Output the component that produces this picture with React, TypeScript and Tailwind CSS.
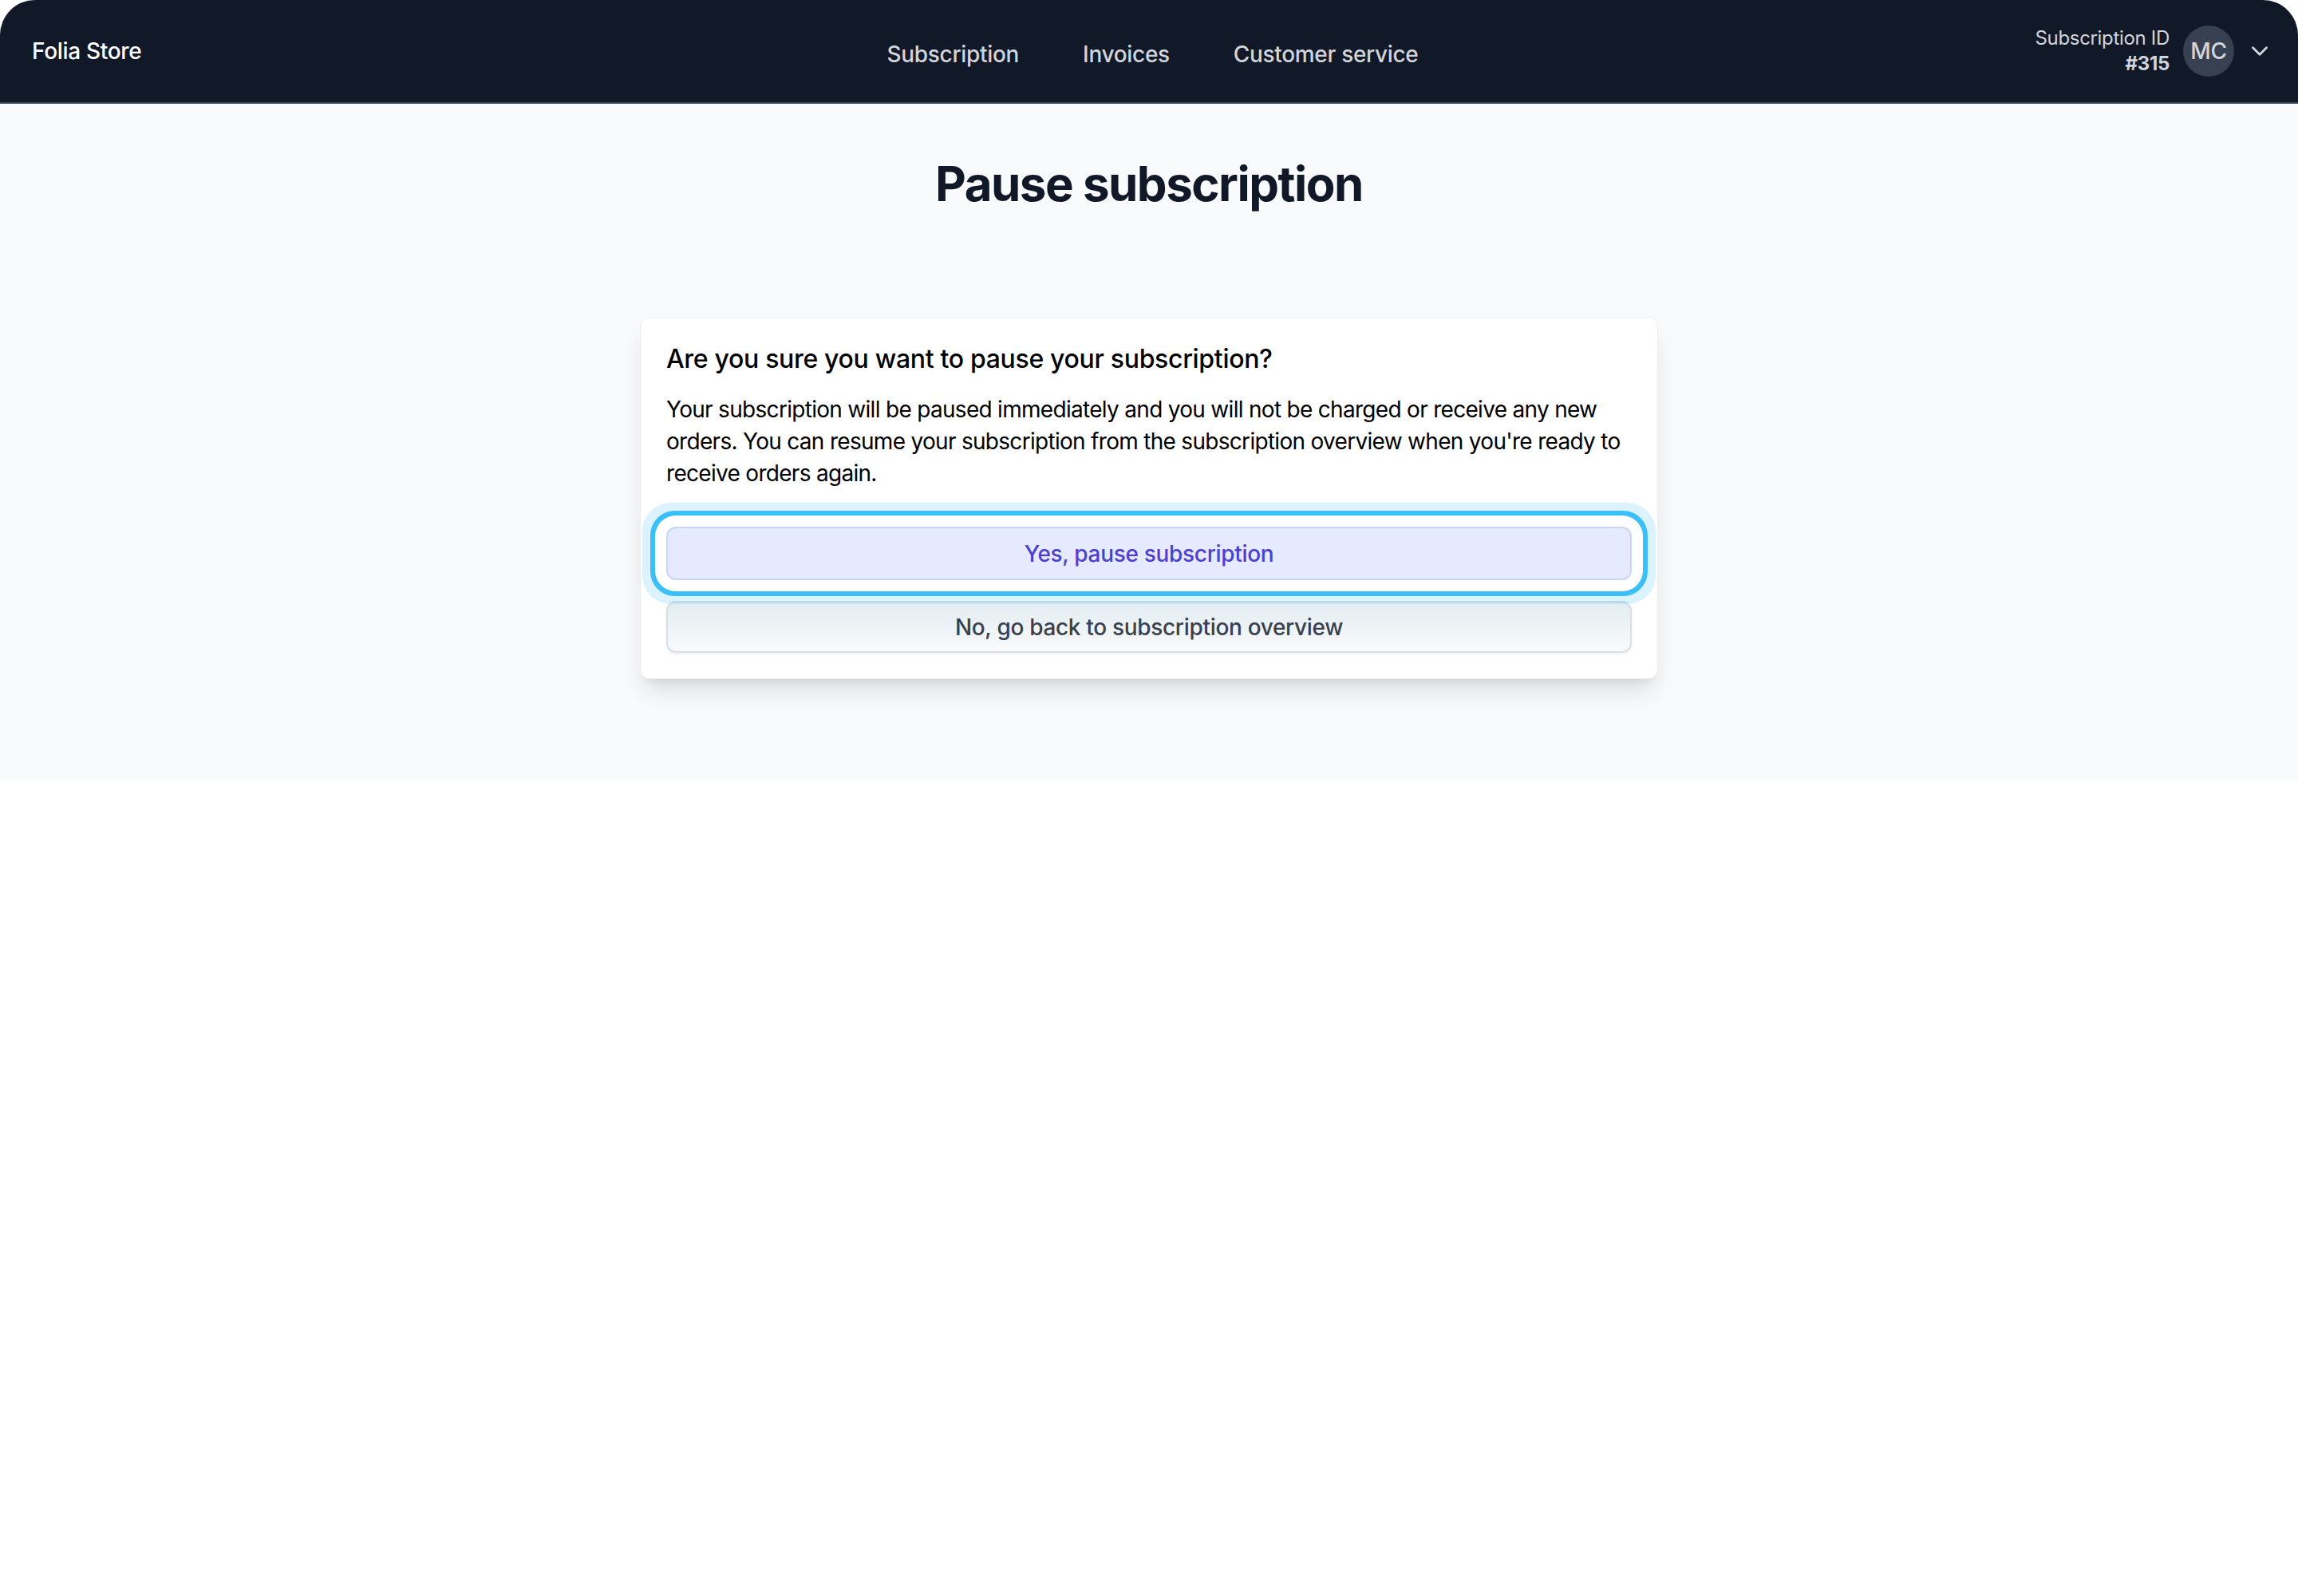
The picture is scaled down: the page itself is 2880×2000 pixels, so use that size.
import { ChevronDown } from 'lucide-react';

const navLinks = ['Subscription', 'Invoices', 'Customer service'];

const Header = () => {
    return (
        <header className="h-[130px] bg-[#111827] rounded-t-[44px] border-b-2 border-[#3a4356] flex items-center justify-between pl-[40px] pr-[31px]">
            <div className="w-[400px] text-[28px] font-medium text-white">Folia Store</div>
            <nav className="flex items-center gap-[32px] pt-[8px]">
                {navLinks.map((link) => (
                    <a key={link} href="#" className="px-[24px] text-[28px] font-medium text-[#d1d5db]">
                        {link}
                    </a>
                ))}
            </nav>
            <div className="w-[400px] flex items-center justify-end">
                <div className="text-right text-[24px] leading-[32px] text-[#d1d5db]">
                    <div>Subscription ID</div>
                    <div className="font-bold">#315</div>
                </div>
                <div className="ml-[17px] w-[64px] h-[64px] rounded-full bg-[#374151] flex items-center justify-center text-[28px] font-medium text-[#d1d5db]">
                    MC
                </div>
                <ChevronDown className="ml-[15px] w-[34px] h-[34px] text-[#d1d5db]" strokeWidth={2} />
            </div>
        </header>
    );
};

const App = () => {
    return (
        <div className="min-h-screen bg-white font-['Inter',sans-serif] tracking-[-0.02em]">
            <Header />
            <main className="bg-[#f9fafb] pt-[64px] pb-[128px]">
                <h1 className="text-center text-[60px] leading-[72px] font-bold tracking-[-0.025em] text-[#111827]">
                    Pause subscription
                </h1>
                <div className="mt-[131px] mx-auto w-[1276px] bg-white rounded-[12px] border border-[#eceef1] p-[32px] shadow-[0_20px_30px_-6px_rgba(0,0,0,0.12),0_8px_12px_-8px_rgba(0,0,0,0.1)]">
                    <h2 className="text-[32px] leading-[40px] font-medium text-black">
                        Are you sure you want to pause your subscription?
                    </h2>
                    <p className="mt-[23px] text-[28px] leading-[40px] tracking-[-0.025em] text-black">
                        Your subscription will be paused immediately and you will not be charged or receive any new
                        orders. You can resume your subscription from the subscription overview when you're ready to
                        receive orders again.
                    </p>
                    <div className="mt-[47px] flex flex-col gap-[26px]">
                        <button className="relative z-10 h-[67px] w-full rounded-[12px] border-2 border-[#c9d6fb] bg-[#e5eafe] text-[28px] font-medium text-[#4c3fd1] shadow-[0_0_0_14px_#ffffff,0_0_0_20px_#3bbff8,0_0_0_30px_rgba(56,189,248,0.18)]">
                            Yes, pause subscription
                        </button>
                        <button className="h-[65px] w-full rounded-[12px] border-2 border-[#d8dee6] bg-linear-to-b from-[#e2ecf0] to-[#f9fafb] text-[28px] font-medium text-[#374151] shadow-[0_2px_3px_rgba(0,0,0,0.06)]">
                            No, go back to subscription overview
                        </button>
                    </div>
                </div>
            </main>
        </div>
    );
};

export default App;
